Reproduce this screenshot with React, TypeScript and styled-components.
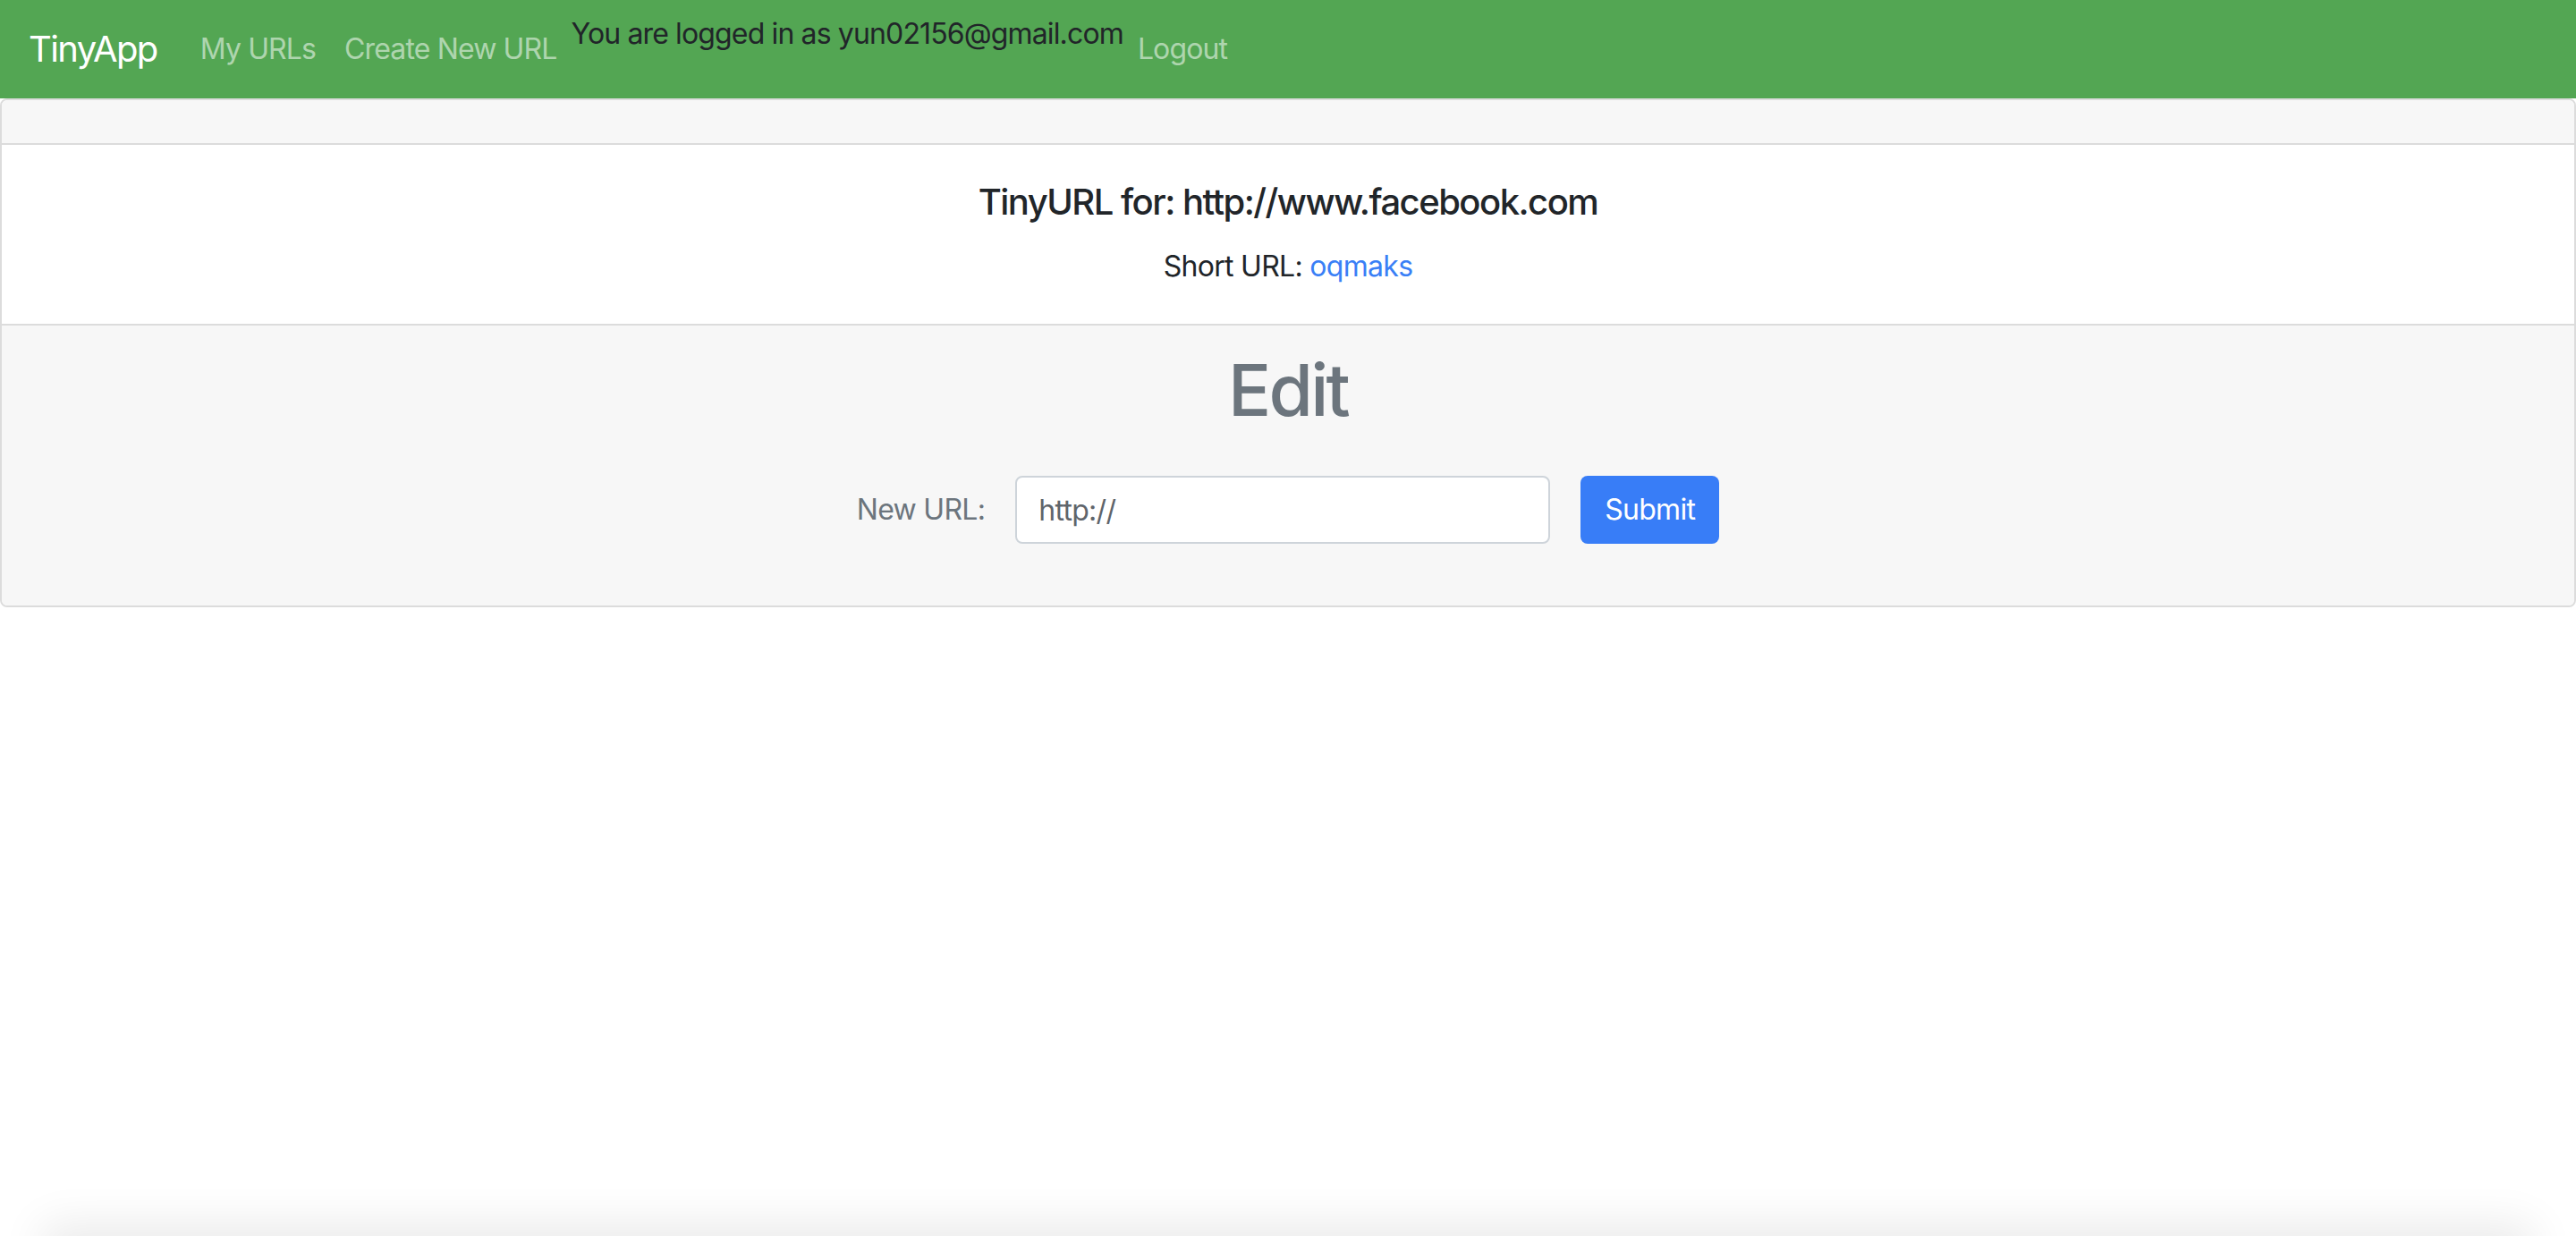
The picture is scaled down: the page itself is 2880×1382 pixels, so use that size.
import React from "react";
import styled, { createGlobalStyle } from "styled-components";

const GlobalStyle = createGlobalStyle`
  html, body {
    margin: 0;
    padding: 0;
    background: #ffffff;
  }
  body {
    font-family: Inter, "Noto Sans", "Liberation Sans", sans-serif;
    font-size: 32px;
    line-height: 1.5;
    letter-spacing: -0.022em;
    color: #212529;
    overflow: hidden;
  }
  * { box-sizing: border-box; }
`;

const Page = styled.div`
  min-height: 1382px;
  display: flex;
  flex-direction: column;
`;

const NavBar = styled.nav`
  height: 110px;
  background: #53a653;
  display: flex;
  align-items: center;
  padding: 0 32px;
  letter-spacing: -0.027em;
`;

const Brand = styled.a`
  color: #ffffff;
  font-size: 40px;
  line-height: 60px;
  letter-spacing: -0.04em;
  padding: 10px 0;
  margin-right: 32px;
  text-decoration: none;
`;

const NavLink = styled.a`
  color: rgba(255, 255, 255, 0.55);
  font-size: 32px;
  line-height: 48px;
  padding: 16px;
  text-decoration: none;
`;

const LoggedIn = styled.span`
  align-self: flex-start;
  margin-top: 14px;
  font-size: 32px;
  line-height: 48px;
  color: #212529;
`;

const Card = styled.section`
  border: 2px solid #dcdcdc;
  border-radius: 8px;
  overflow: hidden;
  display: flex;
  flex-direction: column;
`;

const CardHeader = styled.div`
  background: #f7f7f7;
  height: 50px;
  border-bottom: 2px solid #dcdcdc;
`;

const CardBody = styled.div`
  background: #ffffff;
  padding: 40px;
  text-align: center;
  border-bottom: 2px solid #dcdcdc;
`;

const Title = styled.h5`
  margin: 0 0 24px;
  font-size: 40px;
  line-height: 48px;
  font-weight: 500;
  letter-spacing: -0.038em;
  color: #212529;
`;

const ShortLine = styled.p`
  margin: 0;
  font-size: 32px;
  line-height: 48px;
`;

const ShortLink = styled.a`
  color: #3a7ff6;
  text-decoration: none;
`;

const CardFooter = styled.div`
  background: #f7f7f7;
  padding: 24px 40px 24px;
  text-align: center;
`;

const EditHeading = styled.h1`
  margin: 0 0 48px;
  font-size: 80px;
  line-height: 96px;
  font-weight: 500;
  letter-spacing: -0.034em;
  color: #6c757d;
`;

const FormRow = styled.form`
  display: flex;
  justify-content: center;
  align-items: center;
  gap: 34px;
  margin-bottom: 45px;
`;

const Label = styled.label`
  font-size: 32px;
  line-height: 48px;
  color: #6c757d;
`;

const Input = styled.input`
  width: 598px;
  height: 76px;
  border: 2px solid #ced4da;
  border-radius: 8px;
  background: #ffffff;
  padding: 0 24px;
  font-family: inherit;
  font-size: 32px;
  letter-spacing: -0.022em;
  color: #5f656b;
  outline: none;
`;

const SubmitButton = styled.button`
  height: 76px;
  width: 155px;
  padding: 0;
  border: none;
  border-radius: 8px;
  background: #387df7;
  color: #ffffff;
  font-family: inherit;
  font-size: 32px;
  line-height: 48px;
  letter-spacing: -0.022em;
`;

const BottomShade = styled.div`
  position: fixed;
  left: 60px;
  right: 60px;
  bottom: -30px;
  height: 30px;
  box-shadow: 0 0 50px 12px rgba(0, 0, 0, 0.09);
  pointer-events: none;
`;

export default function App() {
  return (
    <>
      <GlobalStyle />
      <Page>
        <NavBar>
          <Brand href="#">TinyApp</Brand>
          <NavLink href="#">My URLs</NavLink>
          <NavLink href="#">Create New URL</NavLink>
          <LoggedIn>You are logged in as yun02156@gmail.com</LoggedIn>
          <NavLink href="#">Logout</NavLink>
        </NavBar>
        <Card>
          <CardHeader />
          <CardBody>
            <Title>TinyURL for: http://www.facebook.com</Title>
            <ShortLine>
              Short URL: <ShortLink href="#">oqmaks</ShortLink>
            </ShortLine>
          </CardBody>
          <CardFooter>
            <EditHeading>Edit</EditHeading>
            <FormRow onSubmit={(e) => e.preventDefault()}>
              <Label htmlFor="newurl">New URL:</Label>
              <Input id="newurl" type="text" defaultValue="http://" />
              <SubmitButton type="submit">Submit</SubmitButton>
            </FormRow>
          </CardFooter>
        </Card>
      </Page>
      <BottomShade />
    </>
  );
}
